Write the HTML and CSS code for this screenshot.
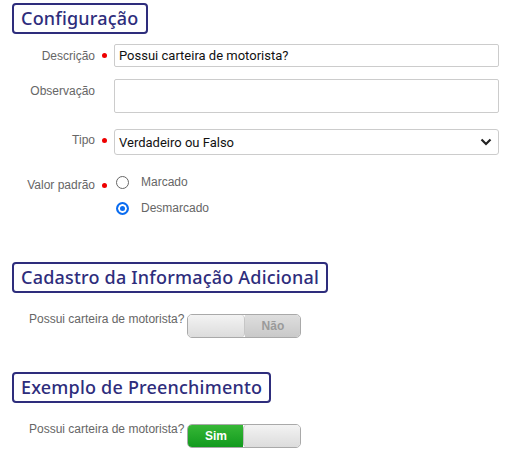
FILE: index.html
```html
<html>
<head>
  <meta charset="utf-8">
  <link rel="stylesheet" href="styles.css">
</head>
<body>
<div class="page">
  <h2 class="box-title">Configuração</h2>
  <div class="form">
    <label class="lbl">Descrição</label>
    <span class="req"></span>
    <input class="field" type="text" value="Possui carteira de motorista?">

    <label class="lbl lbl-top">Observação</label>
    <span></span>
    <textarea class="field area"></textarea>

    <label class="lbl">Tipo</label>
    <span class="req"></span>
    <div class="select">
      <span>Verdadeiro ou Falso</span>
      <svg width="12" height="8" viewBox="0 0 12 8"><path d="M1.5 1.5 L6 6 L10.5 1.5" fill="none" stroke="#222" stroke-width="2.2"/></svg>
    </div>

    <label class="lbl lbl-radio">Valor padrão</label>
    <span class="req req-radio"></span>
    <div class="radios">
      <div class="radio"><span class="dot"></span>Marcado</div>
      <div class="radio"><span class="dot on"></span>Desmarcado</div>
    </div>
  </div>

  <h2 class="box-title second">Cadastro da Informação Adicional</h2>
  <div class="switch-row">
    <span class="switch-lbl">Possui carteira de motorista?</span>
    <div class="switch off">
      <span class="knob"></span>
      <span class="state">Não</span>
    </div>
  </div>

  <h2 class="box-title third">Exemplo de Preenchimento</h2>
  <div class="switch-row">
    <span class="switch-lbl">Possui carteira de motorista?</span>
    <div class="switch on">
      <span class="state">Sim</span>
      <span class="knob"></span>
    </div>
  </div>
</div>
</body>
</html>
```

FILE: styles.css
```css
body {
  margin: 0;
  background: #fff;
  font-family: "Liberation Sans", Arial, sans-serif;
}
.page {
  padding-top: 3px;
}
.box-title {
  display: inline-block;
  margin: 0 0 0 12px;
  padding: 0 7px;
  height: 27px;
  line-height: 26px;
  border: 2px solid #2e2d7c;
  border-radius: 4px;
  color: #2e2d7c;
  font-family: "Noto Sans", sans-serif;
  font-size: 18px;
  font-weight: 500;
  letter-spacing: 0.2px;
}
.form {
  display: grid;
  grid-template-columns: 95px 19px 385px;
  align-items: center;
  margin-top: 10px;
  row-gap: 12px;
}
.lbl {
  text-align: right;
  font-size: 12px;
  color: #666;
}
.lbl-top {
  align-self: start;
  padding-top: 5px;
}
.req {
  justify-self: center;
  width: 5px;
  height: 5px;
  border-radius: 50%;
  background: #e00;
}
.field {
  box-sizing: border-box;
  height: 23px;
  margin: 0;
  padding: 2px 4px;
  border: 1px solid #ccc;
  border-radius: 2px;
  font-family: Roboto, "Noto Sans", sans-serif;
  font-size: 13px;
  color: #111;
  width: 385px;
}
.area {
  height: 34px;
  resize: none;
}
.select {
  box-sizing: border-box;
  height: 26px;
  margin-top: 4px;
  border: 1px solid #ccc;
  border-radius: 3px;
  padding: 0 6px 0 4px;
  display: flex;
  align-items: center;
  justify-content: space-between;
  font-family: Roboto, "Noto Sans", sans-serif;
  font-size: 13px;
  color: #111;
}
.lbl-radio, .req-radio {
  align-self: start;
}
.lbl-radio {
  margin-top: 11px;
}
.req-radio {
  margin-top: 16px;
}
.radios {
  margin-top: 8px;
  display: flex;
  flex-direction: column;
  gap: 12px;
}
.radio {
  display: flex;
  align-items: center;
  height: 14px;
  font-size: 12px;
  color: #666;
}
.dot {
  box-sizing: border-box;
  width: 13px;
  height: 13px;
  margin: 0 12px 0 2px;
  border: 1px solid #666;
  border-radius: 50%;
  background: #fff;
}
.dot.on {
  border: 2px solid #0a6cf0;
  box-shadow: inset 0 0 0 2px #fff;
  background: #0a6cf0;
}
.box-title.second {
  margin-top: 47px;
}
.box-title.third {
  margin-top: 34px;
}
.switch-row {
  display: flex;
  align-items: flex-start;
  margin: 19px 0 0 29px;
}
.switch-lbl {
  font-size: 12px;
  color: #666;
  line-height: 14px;
}
.switch {
  box-sizing: border-box;
  display: flex;
  width: 114px;
  height: 24px;
  margin: 2px 0 0 3px;
  border: 1px solid #a9a9a9;
  border-radius: 5px;
  overflow: hidden;
  font-size: 12px;
  font-weight: bold;
}
.knob {
  width: 56px;
  background: linear-gradient(#f3f3f3, #dcdcdc);
  border-right: 1px solid #c6c6c6;
  border-radius: 0 4px 4px 0;
}
.switch.on .knob {
  border-right: 0;
  border-left: 1px solid #bbb;
  border-radius: 4px 0 0 4px;
}
.state {
  flex: 1;
  display: flex;
  align-items: center;
  justify-content: center;
}
.switch.off .state {
  color: #9a9a9a;
  background: linear-gradient(#dedede, #c9c9c9);
}
.switch.on .state {
  color: #fff;
  background: linear-gradient(#36b736, #129a1e);
}
```
